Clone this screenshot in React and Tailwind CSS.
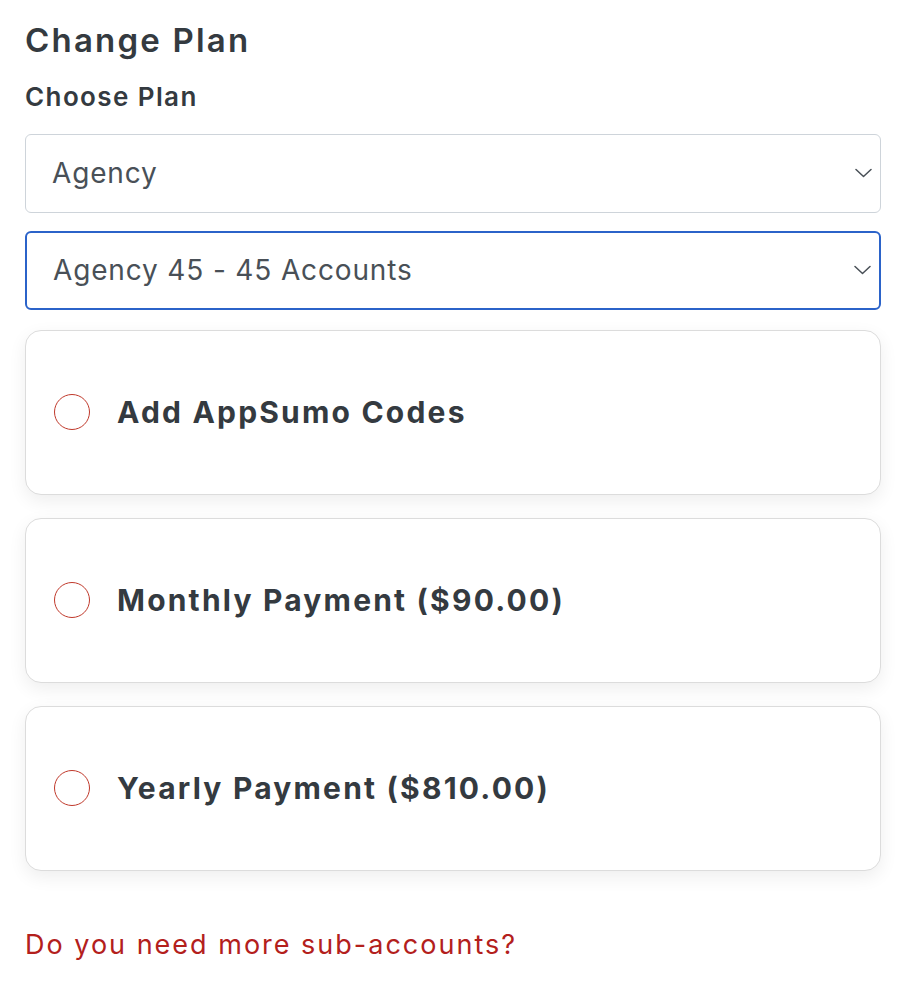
import React from 'react';

const font = { fontFamily: 'Inter, "Open Sans", sans-serif' };

const Chevron = () => (
  <svg width="17" height="10" viewBox="0 0 17 10" fill="none" className="shrink-0">
    <path d="M1 1.5l7.5 7 7.5-7" stroke="#495057" strokeWidth="1.5" strokeLinecap="round" strokeLinejoin="round" />
  </svg>
);

const SelectBox = ({ value, active }) => (
  <div
    className={`flex items-center justify-between h-[79px] pl-[26px] pr-[8px] rounded-md bg-white ${
      active ? 'border-2 border-[#2b63c9]' : 'border border-[#ced4da]'
    }`}
  >
    <span className="text-[28px] text-[#495057] tracking-[0.85px]">{value}</span>
    <Chevron />
  </div>
);

const PlanOption = ({ label }) => (
  <label className="flex items-center h-[165px] px-[28px] gap-[27px] bg-white border border-[#dcdcdc] rounded-[16px] shadow-[0_6px_18px_rgba(0,0,0,0.07)] cursor-pointer">
    <span className="w-[36px] h-[36px] rounded-full border border-[#c0392b] shrink-0"></span>
    <span className="text-[30px] font-bold text-[#343a40] tracking-[2.2px]">{label}</span>
  </label>
);

const App = () => {
  return (
    <div className="bg-white min-h-screen px-[25px] pt-[20px]" style={font}>
      <h1 className="text-[33px] font-semibold text-[#343a40] leading-tight tracking-[2.2px]">Change Plan</h1>
      <h2 className="mt-[20px] text-[26px] font-semibold text-[#343a40] leading-tight tracking-[1.4px]">Choose Plan</h2>

      <div className="mt-[20px] flex flex-col gap-[18px]">
        <SelectBox value="Agency" />
        <SelectBox value="Agency 45 - 45 Accounts" active />
      </div>

      <div className="mt-[20px] flex flex-col gap-[23px]">
        <PlanOption label="Add AppSumo Codes" />
        <PlanOption label="Monthly Payment ($90.00)" />
        <PlanOption label="Yearly Payment ($810.00)" />
      </div>

      <p className="mt-[54px] text-[27px] text-[#b3201c] tracking-[2px]">Do you need more sub-accounts?</p>
    </div>
  );
};

export default App;
